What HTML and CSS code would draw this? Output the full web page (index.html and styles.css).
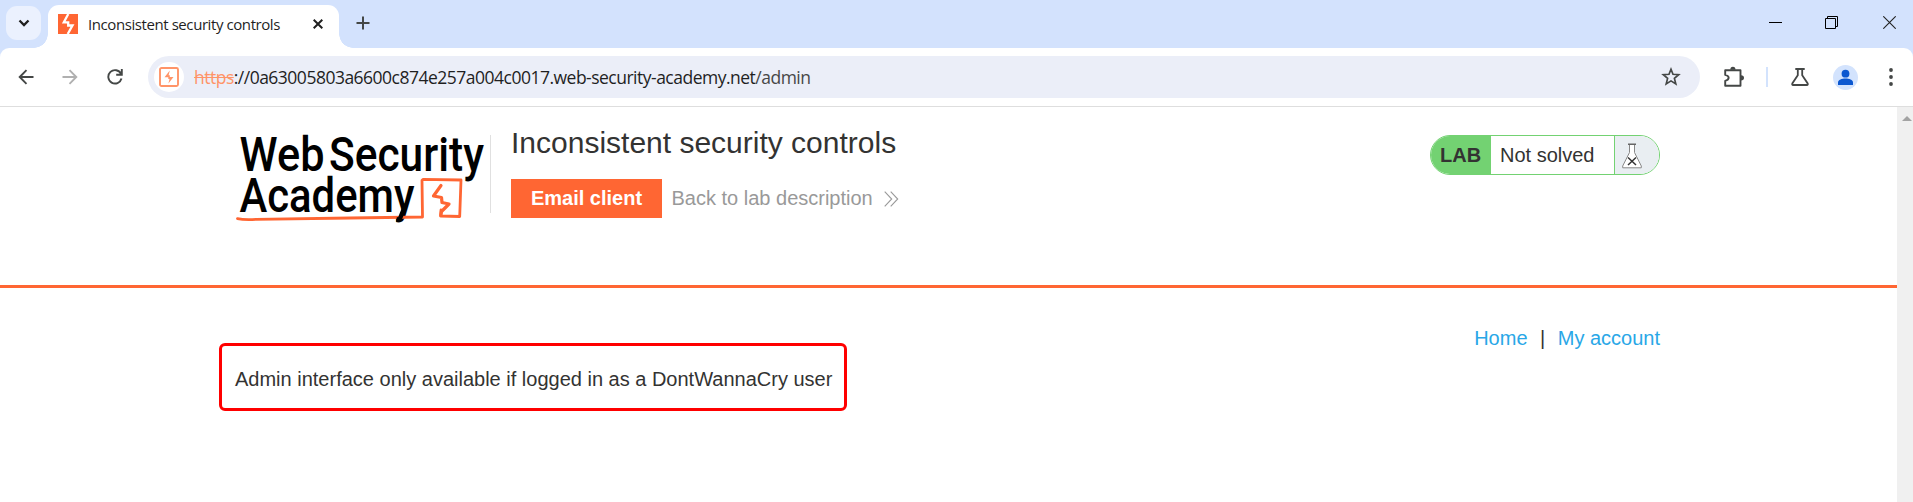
FILE: index.html
```html
<!DOCTYPE html>
<html lang="en">
<head>
<meta charset="utf-8">
<title>Inconsistent security controls</title>
<link rel="stylesheet" href="styles.css">
</head>
<body>
<div class="window">
  <header class="tabstrip">
    <button class="tab-search"><svg width="12" height="8" viewBox="0 0 12 8"><path d="M1.5 1.500 6 6l4.500-4.500" fill="none" stroke="#1f1f1f" stroke-width="2.300"/></svg></button>
    <div class="tab">
      <svg class="favicon" width="20" height="20" viewBox="0 0 20 20"><path fill="#f63" d="M0 0h20v20H0z"/><path d="M10.300 0 5.800 8.300h4.400v3.200h4.300L9.700 20" fill="none" stroke="#fff" stroke-width="2.300"/></svg>
      <span class="tab-title">Inconsistent security controls</span>
      <svg class="tab-close" width="10" height="10" viewBox="0 0 10 10"><path d="m.7.7 8.600 8.600M9.300.7.7 9.300" stroke="#1f1f1f" stroke-width="2"/></svg>
    </div>
    <svg class="new-tab" width="14" height="14" viewBox="0 0 14 14"><path d="M7 .5v13M.5 7h13" stroke="#444746" stroke-width="2"/></svg>
    <div class="controls">
      <svg width="13" height="13" viewBox="0 0 13 13"><path d="M0 6.500h13" stroke="#000"/></svg>
      <svg width="13" height="13" viewBox="0 0 13 13"><path d="M.5 2.500h10v10H.5zM2.500 2V.5h10v10H11" fill="none" stroke="#000"/></svg>
      <svg class="win-close" width="13" height="13" viewBox="0 0 13 13"><path d="m.3.3 12.400 12.400m0-12.400L.3 12.700" stroke="#222" stroke-width="1.100"/></svg>
    </div>
  </header>

  <nav class="toolbar">
    <svg class="nav-icon back" width="16" height="16" viewBox="0 0 16 16"><path d="M15.500 8H2m6.500-6.800L1.700 8l6.800 6.800" fill="none" stroke="#444746" stroke-width="1.900"/></svg>
    <svg class="nav-icon forward" width="16" height="16" viewBox="0 0 16 16"><path d="M.5 8H14M7.500 1.200 14.300 8l-6.800 6.800" fill="none" stroke="#b0b0b0" stroke-width="1.900"/></svg>
    <svg class="nav-icon reload" width="16" height="16" viewBox="0 0 16 16"><path d="M14 4.800A6.700 6.700 0 1 0 14.500 9.500M14.800 0v5.700H9.200" fill="none" stroke="#444746" stroke-width="1.900"/></svg>
    <div class="omnibox">
      <span class="site-badge"><svg width="20" height="20" viewBox="0 0 20 20"><rect x="1" y="1" width="18" height="18" rx="1.500" fill="none" stroke="#ff9468" stroke-width="1.900"/><path d="M10.800 3.600 5.500 10.200h3.800v1.900h1.200l-1.100 4.300 5.100-6.400h-3.700V8.200H9.600z" fill="#ff9468"/></svg></span>
      <span class="url"><s>https</s>://0a63005803a6600c874e257a004c0017.web-security-academy.net<span class="path">/admin</span></span>
      <svg class="star" width="20" height="20" viewBox="0 0 20 20"><path d="m10 2.300 2 5 5.700.4-4.300 3.700 1.400 5.500-4.800-3-4.800 3 1.400-5.500-4.300-3.700L8 7.300z" fill="none" stroke="#444746" stroke-width="1.700"/></svg>
    </div>
    <svg class="puzzle" width="22" height="22" viewBox="0 0 22 22"><path d="M2.200 4.200h15.300v15.500H2.200v-4.800c4.600-1.300 4.600-4.800 0-6z" fill="none" stroke="#444746" stroke-width="1.900" stroke-linejoin="round"/><path d="M7.300 3.800a2.600 3 0 0 1 5.200 0zM18 9.200a3 2.600 0 0 1 0 5.200z" fill="#444746"/></svg>
    <i class="tool-divider"></i>
    <svg class="labs" width="18" height="18" viewBox="0 0 18 18"><path d="M4.300 1h9.400M6.800 1v6.200L1.300 15.500q-.5 1.400.8 1.500h13.800q1.300-.1.800-1.500L11.200 7.200V1" fill="none" stroke="#444746" stroke-width="1.800"/></svg>
    <svg class="profile" width="25" height="25" viewBox="0 0 25 25"><circle cx="12.500" cy="12.500" r="12.500" fill="#d3e3fd"/><circle cx="12.500" cy="8.700" r="3.900" fill="#0b57d0"/><path d="M5 20v-2.500c0-2.500 4-3.900 7.500-3.900s7.500 1.400 7.500 3.900V20z" fill="#0b57d0"/></svg>
    <svg class="more" width="4" height="18" viewBox="0 0 4 18"><g fill="#444746"><circle cx="2" cy="2" r="1.900"/><circle cx="2" cy="9" r="1.900"/><circle cx="2" cy="16" r="1.900"/></g></svg>
  </nav>

  <div class="viewport">
    <main class="page">
      <section class="lab-header">
        <svg class="logo" width="256" height="100" viewBox="234 125 256 100">
          <g font-family="Roboto, sans-serif" font-weight="500" font-size="47.500" fill="#000">
            <text x="239.500" y="171" textLength="85" lengthAdjust="spacingAndGlyphs">Web</text>
            <text x="329" y="171" textLength="155" lengthAdjust="spacingAndGlyphs">Security</text>
            <text x="239.500" y="212" textLength="175" lengthAdjust="spacingAndGlyphs">Academy</text>
          </g>
          <path d="M237.500 218.600Q244 220 256 219.300L350 218l72.500-1L422 180.500l1-1.200 38 .7-1.300 36.500-19.200-.5.500-6" fill="none" stroke="#f63" stroke-width="2.800" stroke-linejoin="round" stroke-linecap="round"/>
          <path d="M441 215l.5-3.500 7.500-7.500-7-1.500-.5-5-8-1.500 7.500-10.500" fill="none" stroke="#f63" stroke-width="3.200" stroke-linejoin="round" stroke-linecap="round"/>
          <path d="M405 206l-5 12.500q-1 1.300-3.500.8" fill="none" stroke="#000" stroke-width="4.500"/>
        </svg>
        <div class="heading">
          <h2>Inconsistent security controls</h2>
          <div class="actions">
            <a class="button">Email client</a>
            <a class="back-link"><span>Back to lab description</span><svg width="15" height="16" viewBox="0 0 15 16"><path d="m.7.7 7 7.300-7 7.300m6-14.600 7 7.300-7 7.300" fill="none" stroke="#999" stroke-width="1.100"/></svg></a>
          </div>
        </div>
        <div class="status">
          <span class="status-tag">LAB</span>
          <span class="status-text">Not solved</span>
          <span class="status-icon"><svg width="20" height="26" viewBox="0 0 20 26"><path d="M7.500 1.500v8L.7 23v1.800h18.600V23l-6.800-13.500v-8z" fill="#fff" stroke="#888" stroke-width="1"/><path d="M6 1.200h8" stroke="#666" stroke-width="1.500"/><path d="m6 14.500 8 7.500m0-7.500-8 7.500" stroke="#333" stroke-width="1.500"/></svg></span>
        </div>
      </section>
      <section class="content">
        <div class="links"><a>Home</a><span>|</span><a>My account</a></div>
        <div class="notice"><span>Admin interface only available if logged in as a DontWannaCry user</span></div>
      </section>
    </main>
    <aside class="scrollbar"><svg width="10" height="6" viewBox="0 0 10 6"><path d="m0 5 5-5 5 5z" fill="#a3a3a3"/></svg></aside>
  </div>
</div>
</body>
</html>
```
FILE: styles.css
```css
* { box-sizing: border-box; }
body { margin: 0; background: #fff; font-family: "Liberation Sans", Arial, sans-serif; color: #333332; }
svg { display: block; flex: none; }
.window { width: 1913px; height: 502px; overflow: hidden; display: flex; flex-direction: column; background: linear-gradient(#d3e2fd 60px, #fff 60px); }

.tabstrip { height: 48px; flex: none; display: flex; padding-left: 6px; }
.tab-search { width: 35px; height: 34px; margin: 6px 7px 0 0; padding: 0; border: 0; border-radius: 11px; background: #ebf1fe; display: flex; align-items: center; justify-content: center; }
.tab { position: relative; width: 291px; height: 43px; margin-top: 5px; padding: 0 16px 6px 10px; background: #fff; border-radius: 11px 11px 0 0; display: flex; align-items: center; }
.tab::before, .tab::after { content: ""; position: absolute; bottom: 0; width: 14px; height: 14px; }
.tab::before { left: -14px; background: radial-gradient(circle at 0 0, transparent 13.500px, #fff 14px); }
.tab::after { right: -14px; background: radial-gradient(circle at 100% 0, transparent 13.500px, #fff 14px); }
.tab-title { flex: 1; margin-left: 10px; font: 15px/20px "Open Sans", "Noto Sans", sans-serif; letter-spacing: -0.42px; color: #1f1f1f; white-space: nowrap; }
.new-tab { margin: 16px 0 0 17px; }
.controls { margin: 16px 17px 0 auto; display: flex; gap: 43px; }
.win-close { margin-left: 2px; }

.toolbar { height: 59px; flex: none; display: flex; align-items: center; padding: 0 20px 1px 18px; background: linear-gradient(#dedede, #dedede) left bottom / 100% 1px no-repeat #fff; border-radius: 9px 9px 0 0; }
.forward { margin-left: 28px; }
.reload { margin-left: 29px; }
.omnibox { width: 1552px; flex: none; height: 42px; margin: 0 23px 0 25px; padding: 0 19px 0 6px; border-radius: 21px; background: #ebeef8; display: flex; align-items: center; }
.site-badge { width: 30px; height: 30px; border-radius: 50%; background: #fff; display: flex; align-items: center; justify-content: center; }
.url { flex: 1; margin-left: 10px; font: 17.500px/24px "Open Sans", "Noto Sans", sans-serif; letter-spacing: -0.505px; color: #1f1f1f; white-space: nowrap; }
.url s { color: #ff9468; }
.path { color: #474747; }
.tool-divider { width: 2px; height: 20px; margin: 0 23px 0 21px; background: #d3e3fd; }
.profile { margin-left: 24px; }
.more { margin-left: 31px; }

.viewport { flex: 1; display: flex; min-height: 0; }
.page { flex: 1; }
.scrollbar { width: 16px; background: #f0f0f0; padding: 9px 0 0 5px; }
.lab-header { height: 181px; padding: 18px 237px 0 234px; border-bottom: 3px solid #f63; display: flex; align-items: flex-start; }
.logo { overflow: visible; }
.heading { margin-top: 10px; padding-left: 20px; border-left: 1px solid #e0e0e0; height: 78px; }
h2 { margin: -10px 0 0; font-size: 30px; line-height: 36px; font-weight: 400; white-space: nowrap; }
.actions { display: flex; margin-top: 18px; align-items: center; gap: 9.500px; }
.button { width: 151px; height: 39px; background: #f63; color: #fff; font-weight: 700; font-size: 20px; line-height: 39px; text-align: center; white-space: nowrap; }
.back-link { display: flex; align-items: center; gap: 11px; color: #999; font-size: 20px; white-space: nowrap; }
.status { width: 230px; height: 40px; margin: 10px 0 0 auto; border: 1px solid #73d272; border-radius: 20px; overflow: hidden; display: flex; font-size: 20px; line-height: 38px; }
.status-tag { width: 60px; padding-left: 9px; background: #73d272; font-weight: 700; }
.status-text { width: 123px; padding-left: 9px; white-space: nowrap; }
.status-icon { flex: 1; border-left: 1px solid #73d272; background: #e9eef2; padding: 7px 0 0 7px; }

.content { padding: 38px 237px 0 219px; }
.links { height: 24px; display: flex; justify-content: flex-end; gap: 12.500px; font-size: 20px; line-height: 24px; }
.links a { color: #29a7e7; }
.notice { width: 628px; height: 68px; margin-top: -7px; padding: 4px 0 0 13px; border: 3px solid #f00; border-radius: 6px; display: flex; align-items: center; font-size: 20px; white-space: nowrap; }
```
